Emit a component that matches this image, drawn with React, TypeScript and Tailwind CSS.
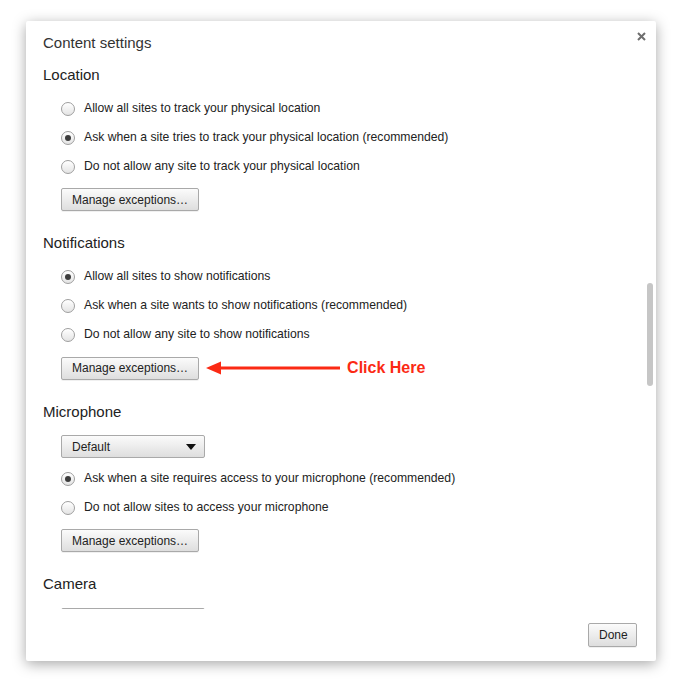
import React from 'react';

const font = { fontFamily: '"Liberation Sans", Arial, sans-serif' };

const Radio: React.FC<{ checked?: boolean; label: string }> = ({ checked, label }) => (
  <div className="flex items-center h-[29px] gap-[9px]">
    <span className="w-[14px] h-[14px] rounded-full border border-[#9e9e9e] bg-gradient-to-b from-[#ffffff] to-[#e4e4e4] flex items-center justify-center shadow-[inset_0_1px_0_#fff]">
      {checked && <span className="w-[6px] h-[6px] rounded-full bg-[#3c3c3c]" />}
    </span>
    <span className="text-[12.2px] text-[#222]">{label}</span>
  </div>
);

const Button: React.FC<{ children: React.ReactNode; className?: string }> = ({ children, className = '' }) => (
  <button
    className={`h-[23px] px-[10px] text-[12px] text-[#222] border border-[#a9a9a9] rounded-[2px] bg-gradient-to-b from-[#fbfbfb] to-[#dedede] shadow-[0_1px_0_rgba(0,0,0,0.06)] ${className}`}
  >
    {children}
  </button>
);

const Select: React.FC<{ label?: string }> = ({ label }) => (
  <div className="w-[144px] h-[23px] border border-[#a9a9a9] rounded-[2px] bg-gradient-to-b from-[#fbfbfb] to-[#dedede] flex items-center justify-between pl-[10px] pr-[8px]">
    <span className="text-[12px] text-[#222]">{label}</span>
    <svg width="10" height="6" viewBox="0 0 10 6">
      <path d="M0 0 L10 0 L5 6 Z" fill="#111" />
    </svg>
  </div>
);

const Header: React.FC<{ title: string; className?: string }> = ({ title, className = '' }) => (
  <div className={`h-[20px] leading-[20px] text-[15px] text-[#222] -ml-[18px] ${className}`}>{title}</div>
);

export default function App() {
  return (
    <div className="min-h-[680px] bg-white pt-[21px] pl-[26px]" style={font}>
      <div className="relative w-[630px] h-[640px] bg-white rounded-[2px] shadow-[0_3px_14px_rgba(0,0,0,0.35)] flex flex-col">
        {/* close */}
        <button className="absolute top-[11px] right-[10px] w-[9px] h-[9px] flex">
          <svg width="9" height="9" viewBox="0 0 9 9">
            <path d="M1 1 L8 8 M8 1 L1 8" stroke="#6e6e6e" strokeWidth="2" />
          </svg>
        </button>

        {/* scrollbar */}
        <div className="absolute top-[262px] right-[3px] w-[6px] h-[103px] rounded-full bg-[#c6c6c6]" />

        <div className="pl-[17px] pt-[12px] h-[34px] leading-[20px] text-[15px] text-[#333]">Content settings</div>

        <div className="h-[554px] overflow-hidden pl-[35px] pt-[10px]">
          <Header title="Location" />
          <div className="mt-[9px]">
            <Radio label="Allow all sites to track your physical location" />
            <Radio checked label="Ask when a site tries to track your physical location (recommended)" />
            <Radio label="Do not allow any site to track your physical location" />
          </div>
          <Button className="mt-[7px]">Manage exceptions…</Button>

          <Header title="Notifications" className="mt-[22px]" />
          <div className="mt-[9px]">
            <Radio checked label="Allow all sites to show notifications" />
            <Radio label="Ask when a site wants to show notifications (recommended)" />
            <Radio label="Do not allow any site to show notifications" />
          </div>
          <div className="flex items-center mt-[7px]">
            <Button>Manage exceptions…</Button>
            <svg width="136" height="14" viewBox="0 0 136 14" className="ml-[7px]">
              <path d="M0 7 L15 0.5 L15 13.5 Z" fill="#fb2a14" />
              <rect x="14" y="5.5" width="120" height="3" fill="#fb2a14" />
            </svg>
            <span className="ml-[5px] text-[16px] font-bold text-[#fb2a14]">Click Here</span>
          </div>

          <Header title="Microphone" className="mt-[22px]" />
          <div className="mt-[13px]">
            <Select label="Default" />
          </div>
          <div className="mt-[6px]">
            <Radio checked label="Ask when a site requires access to your microphone (recommended)" />
            <Radio label="Do not allow sites to access your microphone" />
          </div>
          <Button className="mt-[7px]">Manage exceptions…</Button>

          <Header title="Camera" className="mt-[22px]" />
          <div className="mt-[14px]">
            <Select />
          </div>
        </div>

        <div className="flex justify-end pr-[19px] pt-[14px]">
          <Button className="w-[49px] h-[24px] px-0">Done</Button>
        </div>
      </div>
    </div>
  );
}
